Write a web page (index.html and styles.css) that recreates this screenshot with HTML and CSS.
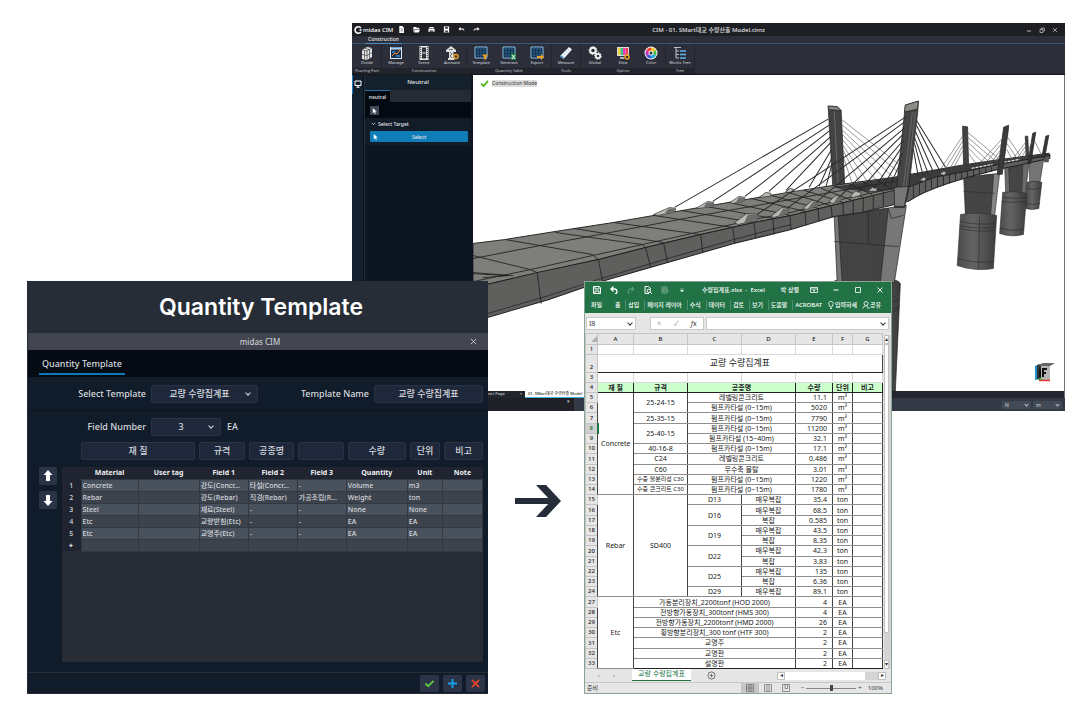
FILE: index.html
```html
<!DOCTYPE html>
<html lang="ko">
<head>
    <meta charset="utf-8">
    <title>Quantity Template</title>
    <link rel="stylesheet" href="styles.css">
</head>
<body>
<main class="stage">

    <!-- modeling window -->
    <section class="cim">
        <header class="cim-title">
            <div class="quick">
                <svg class="logo" viewBox="0 0 10 10"><path d="M8.5 2.6A4 4 0 1 0 8.5 7.4" fill="none" stroke="#fff" stroke-width="2"/><path d="M7 4h2.500v2H7z" fill="#fff"/></svg>
                <b>midas CIM</b>
                <button aria-label="New"><svg viewBox="0 0 8 8"><path d="M1.500 0h3.500l1.800 2v6H1.500z" fill="#fff"/><path d="M3 3.500h2.500M3 5.500h2.500" stroke="#22242c" stroke-width=".7"/></svg></button>
                <button aria-label="Open"><svg viewBox="0 0 8 8"><path d="M.5 1h3l.7 1H7v1.500H2L.5 7zM2.300 4H8L6.700 7.300H1z" fill="#fff"/></svg></button>
                <button aria-label="Print"><svg viewBox="0 0 8 8"><path d="M1.500 1h5v1.500h-5zM.5 3h7v3.500h-7z" fill="#fff"/><path d="M2 5h4v2H2z" fill="#555"/></svg></button>
                <button aria-label="Save"><svg viewBox="0 0 8 8"><path d="M1 .5h6v7H1z" fill="#fff"/><path d="M2.500 1h3v2h-3zM2.500 5h3v2.500h-3z" fill="#33353d"/></svg></button>
                <button aria-label="Undo"><svg viewBox="0 0 8 8"><path d="M3 1L.5 3.500 3 5.500V4h2q1.500 0 2 2 .8-3-2-3.200H3z" fill="#fff"/></svg></button>
                <button aria-label="Redo"><svg viewBox="0 0 8 8"><path d="M5 1l2.500 2.500L5 5.500V4H3Q1.500 4 1 6 .2 3 3 2.800h2z" fill="#fff"/></svg></button>
            </div>
            <h2>CIM - 01. SMart대교 수량산출 Model.cimz</h2>
            <div class="win-buttons">
                <button aria-label="Minimize"><svg viewBox="0 0 6 6"><path d="M1 4h4" stroke="#bbb"/></svg></button>
                <button aria-label="Restore"><svg viewBox="0 0 6 6"><path d="M1 2.500h3v3H1zM2.300 2V1h3v3H4.500" fill="none" stroke="#bbb" stroke-width=".8"/></svg></button>
                <button aria-label="Close"><svg viewBox="0 0 6 6"><path d="M1 1l4 4M5 1L1 5" stroke="#bbb" stroke-width=".8"/></svg></button>
            </div>
        </header>
        <nav class="cim-tabs"><a href="#construction">Construction</a></nav>

        <div class="ribbon">
            <div class="group">
                <div class="tools">
                    <button><svg viewBox="0 0 14 14"><path d="M2 4l5-3 5 1v9l-5 3-5-1z" fill="#e4e4e4"/><path d="M2 4l5 1 5-3M7 5v9M4.500 2.500l5 1v9M2 8.500l5 1 5-3M4.500 4.500v9" fill="none" stroke="#444" stroke-width=".7"/></svg>Divide</button>
                </div>
                <div class="caption">Pouring Part</div>
            </div>
            <div class="group">
                <div class="tools">
                    <button><svg viewBox="0 0 14 14"><path d="M1 1h12v12H1z" fill="#dfe8f2"/><path d="M2 3.500h10V12H2z" fill="#16324e"/><path d="M2 1.800h10" stroke="#3a84c8"/><path d="M3 10l3-3 2 1 3-4" stroke="#ff8a3c" fill="none"/><path d="M3 6h3M7 10h4" stroke="#55b0ff"/></svg>Manage</button>
                    <button><svg viewBox="0 0 14 14"><path d="M2.500 0h9v14h-9z" fill="#e6e6e6"/><path d="M5 1.500h4v5H5zM5 7.500h4v5H5z" fill="#30333c"/><path d="M3.700 1v12M10.300 1v12" stroke="#30333c" stroke-dasharray="1 1"/></svg>Scene</button>
                    <button><svg viewBox="0 0 14 14"><path d="M1 4l5-4 5 4v2H8.500v6h1v2H3v-2h1V6H1z" fill="#ddd"/><path d="M4 3.500h4M5 6l2 2-2 2 2 2" stroke="#444" stroke-width=".7" fill="none"/><circle cx="11" cy="10.500" r="2" fill="none" stroke="#f0a020" stroke-width="1.500"/></svg>Animate</button>
                </div>
                <div class="caption">Construction</div>
            </div>
            <div class="group">
                <div class="tools">
                    <button><svg viewBox="0 0 14 14"><path d="M1 1h12v11H1z" fill="#0d2840" stroke="#8fc3ea"/><path d="M1 3h12M1 6h12M1 9h12M4 1v11M7 1v11M10 1v11" stroke="#356f9c" stroke-width=".7"/><path d="M8 8.500h6l-2 2.500v3l-2-1v-2z" fill="#f0a020"/></svg>Template</button>
                    <button><svg viewBox="0 0 14 14"><path d="M1 1h12v11H1z" fill="#0d2840" stroke="#8fc3ea"/><path d="M1 3h12M1 6h12M1 9h12M4 1v11M7 1v11M10 1v11" stroke="#356f9c" stroke-width=".7"/><path d="M9 7.500h5V14H9z" fill="#1f8a4c"/><path d="M10 9l3 4M13 9l-3 4" stroke="#fff"/></svg>Generate</button>
                    <button><svg viewBox="0 0 14 14"><path d="M1 1h12v11H1z" fill="#0d2840" stroke="#8fc3ea"/><path d="M1 3h12M1 6h12M1 9h12M4 1v11M7 1v11M10 1v11" stroke="#356f9c" stroke-width=".7"/><path d="M7 10h4V8l3 3-3 3v-2H7z" fill="#f0a020"/></svg>Export</button>
                </div>
                <div class="caption">Quantity Table</div>
            </div>
            <div class="group">
                <div class="tools">
                    <button><svg viewBox="0 0 14 14"><path d="M1 10L10 1l3 2.500L4.500 13z" fill="#f4f8ff"/><path d="M1 10l3.500 3 .8-1L2 9z" fill="#3d8fd8"/><path d="M5 7.500l1 1M7 5.500l1 1M9 3.500l1 1" stroke="#68a"/></svg>Measure</button>
                </div>
                <div class="caption">Tools</div>
            </div>
            <div class="group">
                <div class="tools">
                    <button><svg viewBox="0 0 14 14"><circle cx="5" cy="4.500" r="2.800" fill="none" stroke="#f2f2f2" stroke-width="2"/><circle cx="5" cy="4.500" r="4" fill="none" stroke="#f2f2f2" stroke-dasharray="1.500 1.500"/><circle cx="10" cy="10" r="2.200" fill="none" stroke="#f2f2f2" stroke-width="1.800"/><circle cx="10" cy="10" r="3.400" fill="none" stroke="#f2f2f2" stroke-dasharray="1.300 1.300"/></svg>Global</button>
                    <button><svg viewBox="0 0 14 14"><path d="M1 1h12v9H1z" fill="#ddd"/><path d="M2 2h2.500v7H2z" fill="#f4d33a"/><path d="M4.500 2H7v7H4.500z" fill="#3cc47c"/><path d="M7 2h2.500v7H7z" fill="#e83cc8"/><path d="M9.500 2H12v7H9.500z" fill="#f04060"/><path d="M4 12h4" stroke="#ddd" stroke-width="1.500"/><circle cx="11" cy="11" r="2" fill="none" stroke="#f0a020" stroke-width="1.500"/></svg>View</button>
                    <button><svg viewBox="0 0 14 14"><circle cx="7" cy="7" r="6.500" fill="#f4f4f4"/><g fill="none" stroke-width="3"><path d="M7 3a4 4 0 0 1 3.500 2" stroke="#f0c020"/><path d="M10.500 5a4 4 0 0 1 0 4" stroke="#42c04a"/><path d="M10.500 9A4 4 0 0 1 7 11" stroke="#20a8e0"/><path d="M7 11a4 4 0 0 1-3.500-2" stroke="#3858d8"/><path d="M3.500 9a4 4 0 0 1 0-4" stroke="#c030c0"/><path d="M3.500 5A4 4 0 0 1 7 3" stroke="#f04030"/></g><circle cx="7" cy="7" r="1.500" fill="#333"/></svg>Color</button>
                </div>
                <div class="caption">Option</div>
            </div>
            <div class="group">
                <div class="tools">
                    <button><svg viewBox="0 0 14 14"><path d="M1 1.500h7M3 2v10M3 5h3M3 8.500h3M3 12h3" stroke="#bcc3cc" fill="none"/><path d="M7 5h6M7 8.500h6M7 12h6" stroke="#5fb4ea" stroke-width="1.500"/></svg>Works Tree</button>
                </div>
                <div class="caption">Tree</div>
            </div>
        </div>

        <div class="work">
            <div class="rail">
                <button aria-label="Monitor"><svg viewBox="0 0 8 8"><path d="M1 1h6v4.500H1zM4 5.500V7M2.500 7.300h3" fill="none" stroke="#fff"/></svg></button>
            </div>
            <aside class="neutral">
                <h3>Neutral</h3>
                <div class="neutral-tabs"><button>neutral</button></div>
                <div class="neutral-tools"><button aria-label="Pick"><svg viewBox="0 0 8 8"><path d="M2 1v6l1.500-1.400L4.500 8l1-.5-1-2L6.500 5z" fill="#fff"/></svg></button></div>
                <div class="target">
                    <h4><svg viewBox="0 0 6 6"><path d="M1.500 2.500L3 4l1.500-1.500" fill="none" stroke="#ccc" stroke-width=".8"/></svg>Select Target</h4>
                    <button><svg viewBox="0 0 8 8"><path d="M2 1v6l1.500-1.400L4.500 8l1-.5-1-2L6.500 5z" fill="#fff"/></svg>Select</button>
                </div>
            </aside>
            <div class="view">
                <div class="canvas">
                    <svg class="bridge" viewBox="473 75 592 315" preserveAspectRatio="xMinYMin slice" role="img" aria-label="Bridge model">
                        <defs>
                            <linearGradient id="drum"><stop offset="0" stop-color="#4b4b4b"/><stop offset=".4" stop-color="#646464"/><stop offset="1" stop-color="#3c3c3c"/></linearGradient>
                            <pattern id="hatch" width="2" height="2" patternUnits="userSpaceOnUse"><path d="M0 0h2v2H0z" fill="#484848"/><path d="M0 0h1v2H0z" fill="#404040"/></pattern>
                        </defs>
                        <!-- far piers -->
                        <g stroke="#2b2b2b" stroke-width=".6">
                            <path d="M1027 163L1042 158 1038 183H1028z" fill="#747474"/>
                            <path d="M1025 182q7-2 15 0l-3 26q-7 2-13 0z" fill="url(#drum)"/>
                            <path d="M1025 188q7 2 14 0M1024 203q7 2 14 0" fill="none"/>
                            <path d="M1003 166l24-4-3 31h-20z" fill="#6a6a6a"/>
                            <path d="M1007 168l14-3-1 27h-12z" fill="url(#hatch)"/>
                            <path d="M1001 192q12-2 24 1l-3.300 41q-12 3-23.700-1z" fill="url(#drum)"/>
                            <path d="M1001 197q12 2 24 0M1000 201q12 2 24 0M998 228q12 3 24 1" fill="none"/>
                            <path d="M962 177l36-4-5 42h-29z" fill="#858585"/>
                            <path d="M963 177l29-3-3 41h-25z" fill="url(#hatch)"/>
                            <path d="M962 191l31 2" fill="none"/>
                            <path d="M959 214q17-3 36 1l-3.300 53q-18 3-36-3z" fill="url(#drum)"/>
                            <path d="M959 221q17 4 35 2M958 225q17 4 35 2M958 228q17 4 35 2M956 258q17 5 36 3M978 216l-1 53" fill="none"/>
                        </g>
                        <!-- near pier -->
                        <g stroke="#262626" stroke-width=".7">
                            <path d="M829 283q5-4 10-4h50q8 0 10 4l-5 107h-58z" fill="url(#drum)"/>
                            <path d="M892 301q4-1 6-3M892 308q4-1 6-3M892 311q4-1 6-3" fill="none"/>
                            <path d="M833 215l72-10-12 77h-57z" fill="#777"/>
                            <path d="M837 216l50-8-8 74h-38z" fill="url(#hatch)"/>
                            <path d="M833 241l64 5M887 208l3 10 12-3M867 212v31" fill="none"/>
                        </g>
                        <!-- towers on the far side of the deck -->
                        <g stroke="#222" stroke-width=".7" fill="#434343">
                            <path d="M827 106l9 .5 4 4 3.500 74h-12z"/>
                            <path d="M827 106l9 .5 4 4-12.500-1z" fill="#898989"/>
                            <path d="M833 111l4 72" stroke="#777"/>
                            <path d="M961 126l5 .7 1 38h-5z"/>
                            <path d="M1023.500 136h2.500l1 22h-2.500z"/>
                        </g>
                        <!-- cables, far plane -->
                        <path class="cable" d="M827 119L674 207M828 125L712 201M828 131L744 196M829 137L768 191M829 143L785 190M830 150L808 187M831 157L818 186M831 163L825 186"/>
                        <path class="cable thin" d="M840 119L913 176M840 124L903 177M840 129L893 178M841 134L884 179M841 139L875 180M841 144L866 181M842 150L858 182M842 156L851 183M961 136L939 169M961 141L944 168M961 146L949 167M961 151L953 166M966 132L1000 161M966 137L994 161M966 142L988 162M966 147L982 163M966 152L975 164M1024 142L1010 160M1024 146L1014 160M1024 150L1018 160"/>
                        <!-- deck -->
                        <path d="M473 243L505 239 555 231 613 222 653 215 710 205 787 192 833 185 893 177 960 165 993 160 1047 153 1048 155 1027 159 993 165 960 172 933 177 907 187 893 190 843 202 790 215 753 222 700 234 645 247 598 259 537 272 473 287z" fill="#7e7f7b" stroke="#2a2a2a"/>
                        <path d="M830 187L893 177 960 165 1047 153 1048 156 960 172 933 177 907 187 870 192z" fill="#3c3c3c"/>
                        <path d="M473 287L537 272 598 259 645 247 700 234 753 222 790 215 843 202 893 190 907 187 933 177 960 172 993 165 1048 155V158L993 170 963 178 947 183Q920 192 907 201L893 204 860 212 833 216 790 229 733 243 667 262 600 281 548 299 473 321z" fill="#5f5f5d" stroke="#222"/>
                        <path d="M473 317l75-22 52-17 67-20 66-19 57-15" fill="none" stroke="#333"/>
                        <g fill="none" stroke="#252525" stroke-width=".9">
                            <path d="M473 281l57-12 62-14 50-11 58-13 53-12 37-7 55-14 62-13"/>
                            <path d="M473 258l72-14 65-12 90-17 90-16 103-18M600 278"/>
                            <path d="M473 255l57 14 7 3M505 239l87 15 6 5M555 232l87 12 3 3M573 228l90 14M613 222l87 12M653 215l79 12M680 210l73 12M705 206l67 12M728 202l62 13M750 198l54 13M770 195l47 13M787 192l42 13M803 190l39 12M820 188l31 12M834 186l28 11M848 184l23 10M862 182l20 9M876 180l15 9"/>
                            <path d="M537 272l4 31M598 259l4 21M645 247l5 19M663 243l4 19M700 234l2 18M732 227l2 16M753 222l2 15M772 218l1 16M789 215l1 14M804 211l1 14M817 208l1 13M830 205l1 12M842 202v13M852 200v13M862 197v14M872 195v14M882 192v14M912 186v12M918 183v11M924 181v10M930 179v10M936 177v10M942 175v10M948 174v9M954 173v8M960 172v7M966 171v6M972 170v6M978 169v5M984 168v5M990 167v4"/>
                            <path d="M473 273l35 2-25 2M473 272l40 3"/>
                        </g>
                        <path d="M970 168l21-4M1002 162l16-3" stroke="#e6e6e6" stroke-width="1.200" stroke-dasharray="3 1"/>
                        <path d="M1042 157h5v5h-5z" fill="#555"/>
                        <!-- cable anchors -->
                        <g fill="#b9bab4" stroke="#333" stroke-width=".7">
                            <path d="M653 214l16-7 6 1-1 4-17 3zM695 208l12-7 6 1-1 4-14 2zM729 202l9-6 6 1-1 4-11 2zM758 197l7-5 5 1-1 3zM784 192l5-4 4 1-2 3z"/>
                            <path d="M734 222l12-9 11 1-1 6-19 4zM770 216l11-9 7 1-1 5-14 4zM802 208l9-8 6 1-1 5-11 3zM828 201l7-6 6 1-1 4-9 3zM849 196l5-5 6 1-1 3-7 2zM867 191l4-4 5 1-1 3zM938 174l4-3 3 1-2 3zM918 180l4-3 3 1-2 3z"/>
                        </g>
                        <path d="M668 208l7 0-1 4-10 1zM706 202l7 0-1 4-9 1zM738 197l6 0-1 4-8 1zM747 214l10 0-1 6-13 3zM782 208l6 0-1 5-10 3zM812 201l5 0-1 5-9 2zM836 196l5 0-1 4-7 2z" fill="#6c6c6a"/>
                        <!-- towers and cables, near plane -->
                        <g stroke="#1e1e1e" stroke-width=".7">
                            <path d="M904 105l13-4-.7 11-9.300 79-4 16h-10z" fill="#454545"/>
                            <path d="M904 105l13-4-1 8-13 3z" fill="#8b8b87"/>
                            <path d="M911 112l-11 92M914 112l-10 79" stroke="#757575"/>
                            <path d="M893 187l14-1-4 20h-10z" fill="#777"/>
                            <path d="M1002 127l5-2-.5 6-6 43h-5z" fill="#3b3b3b"/>
                            <path d="M1031 133l3-1-5 31h-3zM1044 136l3-1-4 22h-3z" fill="#383838"/>
                        </g>
                        <path class="cable" d="M904 117L756 214M903 122L786 208M903 128L815 202M902 134L838 197M902 140L857 192M901 146L873 188M901 153L882 186M900 160L889 185"/>
                        <path class="cable" d="M915 120L944 167M915 125L938 170M914 131L932 172M913 137L927 174M913 143L922 176M912 149L917 177"/>
                        <path class="cable thin" d="M1002 137L978 163M1001 142L984 163M1001 147L989 163M1000 152L993 162M1006 137L1020 158M1005 143L1016 159M1005 149L1011 160M1031 141L1022 158M1033 141L1040 155"/>
                    </svg>
                    <p class="mode"><svg viewBox="0 0 10 8"><path d="M1 4l3 3 5-6" fill="none" stroke="#4db51e" stroke-width="2"/></svg><span>Construction Mode</span></p>
                    <svg class="cube" viewBox="0 0 20 20"><path d="M0 3l5-2v15l-5 1z" fill="#1f8fd0"/><path d="M2 2l5-1v14l-5 1z" fill="#333"/><path d="M6 3h9v14H6z" fill="#b4b4b4"/><path d="M3 2l5-2h12l-5 3H6z" fill="#666"/><path d="M8 14V6h4M8 10h3M5 6v8" stroke="#111" stroke-width="2" fill="none"/><path d="M2 17l4-2 2 2z" fill="#3bc03b"/><path d="M4 17.500h11" stroke="#e33" stroke-width="1.500"/></svg>
                </div>
                <nav class="docs">
                    <a href="#start">Start Page <i>×</i></a>
                    <a href="#model" class="open">01. SMart대교 수량산출 Model</a>
                </nav>
            </div>
        </div>
        <footer class="cim-status">
            <div class="message">▾</div>
            <span class="drop"><select aria-label="Force unit"><option>N</option></select></span>
            <span class="drop"><select aria-label="Length unit"><option>m</option></select></span>
        </footer>
    </section>

    <!-- template dialog -->
    <section class="dialog">
        <h1>Quantity Template</h1>
        <header class="dialog-title">
            <span>midas CIM</span>
            <button aria-label="Close"><svg viewBox="0 0 8 8"><path d="M1 1l6 6M7 1L1 7" stroke="#d0d0d4"/></svg></button>
        </header>
        <nav class="dialog-tabs"><a href="#template">Quantity Template</a></nav>
        <form class="dialog-body">
            <div class="line first">
                <label for="template">Select Template</label>
                <span class="drop wide"><select id="template"><option>교량 수량집계표</option></select></span>
                <label for="name" class="name">Template Name</label>
                <input id="name" type="text" value="교량 수량집계표">
            </div>
            <div class="line">
                <label for="fields">Field Number</label>
                <span class="drop"><select id="fields"><option>3</option></select></span>
                <span class="unit">EA</span>
            </div>
            <div class="heads">
                <button type="button">재 질</button>
                <button type="button">규격</button>
                <button type="button">공종명</button>
                <button type="button" aria-label="Field 3"></button>
                <button type="button">수량</button>
                <button type="button">단위</button>
                <button type="button">비고</button>
            </div>
            <div class="grid">
                <div class="move">
                    <button type="button" aria-label="Up"><svg viewBox="0 0 10 12"><path d="M5 0l4.500 5H7v6H3V5H.5z" fill="#fff"/></svg></button>
                    <button type="button" aria-label="Down"><svg viewBox="0 0 10 12"><path d="M5 12l4.500-5H7V1H3v6H.5z" fill="#fff"/></svg></button>
                </div>
                <div class="sheet">
                    <table class="fields">
                        <colgroup><col class="no"><col class="c1"><col class="c2"><col class="c3"><col class="c3"><col class="c3"><col class="c4"><col class="c5"><col class="c6"></colgroup>
                        <thead>
                        <tr><th></th><th>Material</th><th>User tag</th><th>Field 1</th><th>Field 2</th><th>Field 3</th><th>Quantity</th><th>Unit</th><th>Note</th></tr>
                        </thead>
                        <tbody>
                        <tr><th>1</th><td>Concrete</td><td></td><td>강도(Concr...</td><td>타설(Concr...</td><td>-</td><td>Volume</td><td>m3</td><td></td></tr>
                        <tr><th>2</th><td>Rebar</td><td></td><td>강도(Rebar)</td><td>직경(Rebar)</td><td>가공조립(R...</td><td>Weight</td><td>ton</td><td></td></tr>
                        <tr><th>3</th><td>Steel</td><td></td><td>재료(Steel)</td><td>-</td><td>-</td><td>None</td><td>None</td><td></td></tr>
                        <tr><th>4</th><td>Etc</td><td></td><td>교량받침(Etc)</td><td>-</td><td>-</td><td>EA</td><td>EA</td><td></td></tr>
                        <tr><th>5</th><td>Etc</td><td></td><td>교명주(Etc)</td><td>-</td><td>-</td><td>EA</td><td>EA</td><td></td></tr>
                        <tr><th>✦</th><td></td><td></td><td></td><td></td><td></td><td></td><td></td><td></td></tr>
                        </tbody>
                    </table>
                </div>
            </div>
        </form>
        <footer class="dialog-foot">
            <button aria-label="OK"><svg viewBox="0 0 12 10"><path d="M1.500 5l3 3 6-6" fill="none" stroke="#5ccb3f" stroke-width="2"/></svg></button>
            <button aria-label="Add"><svg viewBox="0 0 12 10"><path d="M6 0v10M1 5h10" stroke="#12a4ea" stroke-width="2"/></svg></button>
            <button aria-label="Cancel"><svg viewBox="0 0 12 10"><path d="M2 1l8 8M10 1L2 9" stroke="#e8432b" stroke-width="2"/></svg></button>
        </footer>
    </section>

    <svg class="arrow" viewBox="0 0 46 32"><path d="M0 16h40" stroke="#262d38" stroke-width="6"/><path d="M21 0h10l15 16-15 16H21l15-16z" fill="#262d38"/></svg>

    <!-- spreadsheet window -->
    <section class="excel">
        <header class="excel-title">
            <div class="excel-quick">
                <button aria-label="Save"><svg viewBox="0 0 8 8"><path d="M.5.5h6l1 1v6h-7zM2 .5V3h4V.5M2 7.500V5h4v2.500" fill="none" stroke="#fff"/></svg></button>
                <button aria-label="Undo"><svg viewBox="0 0 8 8"><path d="M3.500.5L1 3l2.500 2.500M1 3h4q2 .5 2 2.500T5 8" fill="none" stroke="#fff" stroke-width="1.300"/></svg></button>
                <button aria-label="Redo" class="off"><svg viewBox="0 0 8 8"><path d="M4.500.5L7 3 4.500 5.500M7 3H3Q1 3.500 1 5.500T3 8" fill="none" stroke="#fff"/></svg></button>
                <button aria-label="Preview"><svg viewBox="0 0 8 8"><path d="M5 7.500H1v-7h3.500l2 2v1" fill="none" stroke="#fff"/><circle cx="4.800" cy="4.800" r="1.700" fill="none" stroke="#fff"/><path d="M6 6l2 2" stroke="#fff"/></svg></button>
                <button aria-label="Form" class="off"><svg viewBox="0 0 8 8"><path d="M1 1h5v6H1zM1 3h5M1 5h7M3 1v6" fill="none" stroke="#fff"/></svg></button>
                <button aria-label="More"><svg viewBox="0 0 8 8"><path d="M2.500 3h3M2.500 4.500h3L4 6z" fill="#fff" stroke="#fff" stroke-width=".5"/></svg></button>
            </div>
            <h2>수량집계표.xlsx &nbsp;-&nbsp; Excel</h2>
            <span>박 상렬</span>
            <div class="excel-buttons">
                <button aria-label="Ribbon options"><svg viewBox="0 0 8 8"><path d="M.5 1.500h7v5h-7zM.5 3h7M4 6V4M3 5l1-1 1 1" fill="none" stroke="#fff" stroke-width=".8"/></svg></button>
                <button aria-label="Minimize"><svg viewBox="0 0 8 8"><path d="M1.500 4h5" stroke="#fff"/></svg></button>
                <button aria-label="Maximize"><svg viewBox="0 0 8 8"><path d="M1.500 1.500h5v5h-5z" fill="none" stroke="#fff" stroke-width=".8"/></svg></button>
                <button aria-label="Close"><svg viewBox="0 0 8 8"><path d="M1.500 1.500l5 5M6.500 1.500l-5 5" stroke="#fff" stroke-width=".9"/></svg></button>
            </div>
        </header>
        <nav class="excel-menu">
            <button class="file">파일</button><button>홈</button><button>삽입</button><button>페이지 레이아</button><button>수식</button><button>데이터</button><button>검토</button><button>보기</button><button>도움말</button><button>ACROBAT</button>
            <button class="tell"><svg viewBox="0 0 8 8"><path d="M3 6Q3 5 2.200 4a2.300 2.300 0 1 1 3.600 0Q5 5 5 6zM3 7.500h2" fill="none" stroke="#fff" stroke-width=".8"/></svg>입력하세</button>
            <button class="tell"><svg viewBox="0 0 8 8"><circle cx="4" cy="2.500" r="2" fill="none" stroke="#fff" stroke-width=".8"/><path d="M.8 7.500Q1 5 4 4.800 5.500 5 6 6M5 7h3" fill="none" stroke="#fff" stroke-width=".8"/></svg>공유</button>
        </nav>
        <div class="formula">
            <span class="drop"><select aria-label="Name box"><option>I8</option></select></span>
            <div class="fx"><button aria-label="Cancel">×</button><button aria-label="Enter">✓</button><button class="fn"><i>f</i>x</button></div>
            <span class="drop entry"><input type="text" aria-label="Formula"></span>
        </div>
        <div class="book">
            <table class="cells">
                <colgroup><col class="no"><col class="a"><col class="b"><col class="b"><col class="b"><col class="e"><col class="f"><col class="g"></colgroup>
                <thead>
                <tr><th class="corner">◢</th><th>A</th><th>B</th><th>C</th><th>D</th><th>E</th><th>F</th><th>G</th></tr>
                </thead>
                <tbody>
                <tr class="blank"><th>1</th><td></td><td></td><td></td><td></td><td></td><td></td><td></td></tr>
                <tr class="title"><th>2</th><td colspan="7">교량 수량집계표</td></tr>
                <tr class="blank"><th>3</th><td></td><td></td><td></td><td></td><td></td><td></td><td></td></tr>
                <tr class="head"><th>4</th><td>재 질</td><td>규격</td><td colspan="2">공종명</td><td>수량</td><td>단위</td><td>비고</td></tr>
                <tr><th>5</th><td rowspan="10">Concrete</td><td rowspan="2">25-24-15</td><td colspan="2">레벨링콘크리트</td><td class="n">11.1</td><td>m³</td><td></td></tr>
                <tr><th>6</th><td colspan="2">펌프카타설 (0~15m)</td><td class="n">5020</td><td>m³</td><td></td></tr>
                <tr><th>7</th><td>25-35-15</td><td colspan="2">펌프카타설 (0~15m)</td><td class="n">7790</td><td>m³</td><td></td></tr>
                <tr class="current"><th>8</th><td rowspan="2">25-40-15</td><td colspan="2">펌프카타설 (0~15m)</td><td class="n">11200</td><td>m³</td><td></td></tr>
                <tr><th>9</th><td colspan="2">펌프카타설 (15~40m)</td><td class="n">32.1</td><td>m³</td><td></td></tr>
                <tr><th>10</th><td>40-16-8</td><td colspan="2">펌프카타설 (0~15m)</td><td class="n">17.1</td><td>m³</td><td></td></tr>
                <tr><th>11</th><td>C24</td><td colspan="2">레벨링콘크리트</td><td class="n">0.486</td><td>m³</td><td></td></tr>
                <tr><th>12</th><td>C60</td><td colspan="2">무수축 몰탈</td><td class="n">3.01</td><td>m³</td><td></td></tr>
                <tr><th>13</th><td class="long">수중 불분리성 C30</td><td colspan="2">펌프카타설 (0~15m)</td><td class="n">1220</td><td>m³</td><td></td></tr>
                <tr><th>14</th><td class="long">수중 콘크리트 C30</td><td colspan="2">펌프카타설 (0~15m)</td><td class="n">1780</td><td>m³</td><td></td></tr>
                <tr class="part"><th>15</th><td rowspan="10">Rebar</td><td rowspan="10">SD400</td><td>D13</td><td>매우복잡</td><td class="n">35.4</td><td>ton</td><td></td></tr>
                <tr><th>16</th><td rowspan="2">D16</td><td>매우복잡</td><td class="n">68.5</td><td>ton</td><td></td></tr>
                <tr><th>17</th><td>복잡</td><td class="n">0.585</td><td>ton</td><td></td></tr>
                <tr><th>18</th><td rowspan="2">D19</td><td>매우복잡</td><td class="n">43.5</td><td>ton</td><td></td></tr>
                <tr><th>19</th><td>복잡</td><td class="n">8.35</td><td>ton</td><td></td></tr>
                <tr><th>20</th><td rowspan="2">D22</td><td>매우복잡</td><td class="n">42.3</td><td>ton</td><td></td></tr>
                <tr><th>21</th><td>복잡</td><td class="n">3.83</td><td>ton</td><td></td></tr>
                <tr><th>22</th><td rowspan="2">D25</td><td>매우복잡</td><td class="n">135</td><td>ton</td><td></td></tr>
                <tr><th>23</th><td>복잡</td><td class="n">6.36</td><td>ton</td><td></td></tr>
                <tr><th>24</th><td>D29</td><td>매우복잡</td><td class="n">89.1</td><td>ton</td><td></td></tr>
                <tr class="part"><th>27</th><td rowspan="7">Etc</td><td colspan="3">가동분리장치_2200tonf (HOD 2000)</td><td class="n">4</td><td>EA</td><td></td></tr>
                <tr><th>28</th><td colspan="3">전방향가동장치_300tonf (HMS 300)</td><td class="n">4</td><td>EA</td><td></td></tr>
                <tr><th>29</th><td colspan="3">전방향가동장치_2200tonf (HMD 2000)</td><td class="n">26</td><td>EA</td><td></td></tr>
                <tr><th>30</th><td colspan="3">횡방향분리장치_300 tonf (HTF 300)</td><td class="n">2</td><td>EA</td><td></td></tr>
                <tr><th>31</th><td colspan="3">교명주</td><td class="n">2</td><td>EA</td><td></td></tr>
                <tr><th>32</th><td colspan="3">교명판</td><td class="n">2</td><td>EA</td><td></td></tr>
                <tr class="last"><th>33</th><td colspan="3">설명판</td><td class="n">2</td><td>EA</td><td></td></tr>
                </tbody>
            </table>
            <div class="vscroll"><span>▴</span><div></div><span>▾</span></div>
        </div>
        <div class="sheets">
            <span class="nav">‹</span><span class="nav">›</span>
            <a href="#sheet">교량 수량집계표</a>
            <button aria-label="New sheet"><svg viewBox="0 0 10 10"><circle cx="5" cy="5" r="4" fill="none" stroke="#666"/><path d="M5 3v4M3 5h4" stroke="#666"/></svg></button>
            <div class="hscroll"><span>◂</span><div></div><span>▸</span></div>
        </div>
        <footer class="excel-status">
            <span>준비</span>
            <button class="on" aria-label="Normal"><svg viewBox="0 0 8 8"><path d="M.5.5h7v7h-7zM.5 3h7M.5 5h7M3 0v8M5 0v8" fill="none" stroke="#777" stroke-width=".8"/></svg></button>
            <button aria-label="Page layout"><svg viewBox="0 0 8 8"><path d="M.5.5h7v7h-7zM2 2h4M2 4h4M2 6h4" fill="none" stroke="#777" stroke-width=".8"/></svg></button>
            <button aria-label="Page break"><svg viewBox="0 0 8 8"><path d="M.5.5h7v7h-7zM3 0v4.500h2.500V0" fill="none" stroke="#777" stroke-width=".8"/></svg></button>
            <div class="zoom"><span>−</span><input type="range" aria-label="Zoom" min="10" max="190" value="100"><span>+</span></div>
            <span>100%</span>
        </footer>
    </section>
</main>
</body>
</html>
```
FILE: styles.css
```css
*, *::after {
    box-sizing: border-box;
}

body {
    margin: 0;
    background: #fff;
    font-family: "Noto Sans", "Noto Sans CJK KR", sans-serif;
    font-size: 7px;
    line-height: 10px;
}

h1, h2, h3, h4, p {
    margin: 0;
    font-weight: normal;
    font-size: inherit;
}

button, input, select {
    font: inherit;
    color: inherit;
    background: none;
    border: 0;
    border-radius: 0;
    margin: 0;
    padding: 0;
    min-width: 0;
}

select {
    appearance: none;
    width: 100%;
    height: 100%;
}

a {
    color: inherit;
    text-decoration: none;
}

svg {
    display: block;
    flex: none;
}

/* the three windows overlap on one grid */
.stage {
    display: grid;
    grid-template-columns: 325fr 136fr 96fr 308fr 173fr;
    grid-template-rows: 258px 130px auto;
    padding: 23px 23px 27px 27px;
}

.drop {
    position: relative;
    display: block;
}

.drop::after {
    content: "";
    position: absolute;
    right: 7px;
    top: 50%;
    width: 4px;
    height: 4px;
    margin-top: -3px;
    border: solid currentColor;
    border-width: 0 1px 1px 0;
    transform: rotate(45deg);
    pointer-events: none;
}

/* modeling window */
.cim {
    grid-column: 2 / -1;
    grid-row: 1 / 3;
    display: flex;
    flex-direction: column;
    min-width: 0;
    background: #2c2f39;
    color: #c4c6cc;
    font-size: 5px;
    font-weight: 500;
    line-height: 6px;
}

.cim-title {
    display: grid;
    grid-template-columns: 1fr auto 1fr;
    align-items: center;
    height: 13px;
    background: #1e1f25;
}

.cim-title h2 {
    font-size: 6px;
    font-weight: 500;
    color: #e2e2e4;
}

.quick {
    display: flex;
    align-items: center;
    gap: 8px;
    padding-left: 2px;
}

.quick b {
    margin: 0 -3px 0 -7px;
    font-size: 6px;
    font-weight: 500;
    color: #fff;
}

.quick svg {
    width: 7px;
    height: 7px;
}

.quick .logo {
    width: 8px;
    height: 8px;
}

.win-buttons {
    display: flex;
    justify-content: flex-end;
    gap: 7px;
    padding-right: 7px;
}

.win-buttons svg {
    width: 6px;
    height: 6px;
}

.cim-tabs {
    height: 8px;
    border-bottom: 1px solid #345877;
    padding-left: 13px;
    line-height: 7px;
    color: #e4e4e6;
}

.cim-tabs a {
    display: inline-block;
    height: 8px;
    padding: 0 3px;
    border-bottom: 1px solid #4b8fc9;
}

.ribbon {
    display: flex;
    height: 31px;
    padding-left: 1px;
    border-bottom: 1px solid #14161c;
}

.group {
    display: flex;
    flex-direction: column;
    justify-content: space-between;
    border-right: 1px solid #23252d;
}

.tools {
    display: flex;
    padding-top: 2px;
}

.tools button {
    width: 28px;
    font-size: 4px;
    line-height: 5px;
    white-space: nowrap;
}

.tools svg {
    width: 14px;
    height: 14px;
    margin: 0 auto;
}

.caption {
    height: 6px;
    background: #22242c;
    font-size: 4px;
    text-align: center;
    color: #b4b6be;
}

.work {
    display: flex;
    flex: 1;
    min-height: 0;
    background: #0c1622;
}

.rail {
    width: 12px;
    border-right: 1px solid #0a0f16;
    background: #14202e;
}

.rail button {
    display: block;
    width: 11px;
    padding: 5px 1px 6px;
    border-left: 1px solid #1a7ec0;
}

.rail svg {
    width: 8px;
    height: 8px;
}

.neutral {
    width: 107px;
    border-left: 1px solid #25303c;
    color: #e4e6ea;
}

.neutral h3 {
    height: 15px;
    background: #14202c;
    font-size: 6px;
    font-weight: 500;
    line-height: 15px;
    text-align: center;
}

.neutral-tabs {
    height: 12px;
    background: #242b35;
}

.neutral-tabs button {
    width: 25px;
    height: 12px;
    background: #040a11;
    border-top: 1px solid #2b6fa5;
}

.neutral-tools {
    height: 16px;
    padding: 4px 5px;
    background: #040a11;
}

.neutral-tools button {
    padding: 1px;
    background: #3d4755;
}

.neutral-tools svg, .target svg {
    width: 7px;
    height: 7px;
}

.target {
    padding: 2px 3px 3px 5px;
    background: #111c28;
}

.target h4 {
    display: flex;
    gap: 1px;
    height: 11px;
    font-weight: 500;
    line-height: 8px;
}

.target button {
    display: grid;
    grid-template-columns: 7px 1fr 7px;
    align-items: center;
    width: 100%;
    height: 11px;
    padding: 0 2px;
    border-radius: 1px;
    background: #0f7db8;
}

.view {
    display: flex;
    flex: 1;
    flex-direction: column;
    min-width: 0;
    margin-left: 2px;
    border-right: 1px solid #70717c;
}

.canvas {
    position: relative;
    flex: 1;
    min-height: 0;
    background: #fff;
}

.bridge {
    width: 100%;
    height: 100%;
}

.cable {
    fill: none;
    stroke: #2b2b2b;
    stroke-width: 1;
}

.cable.thin {
    stroke: #555;
    stroke-width: .6;
}

.mode {
    position: absolute;
    left: 7px;
    top: 5px;
    display: flex;
    gap: 3px;
    color: #333;
    line-height: 7px;
}

.mode span {
    background: #dcdcdc;
}

.mode svg {
    width: 9px;
    height: 7px;
}

.cube {
    position: absolute;
    right: 9px;
    bottom: 8px;
    width: 20px;
    height: 20px;
}

.docs {
    display: flex;
    height: 7px;
    background: #23262f;
    font-size: 4px;
    line-height: 6px;
    white-space: nowrap;
}

.docs a {
    display: flex;
    justify-content: space-between;
    width: 52px;
    padding: 0 3px 0 12px;
}

.docs .open {
    width: auto;
    padding: 0 6px 0 3px;
    border-bottom: 1px solid #4aaee0;
    background: #fff;
    color: #222;
}

.docs i {
    font-style: normal;
}

.cim-status {
    display: flex;
    align-items: center;
    gap: 2px;
    height: 13px;
    padding-right: 3px;
    background: #333a45;
}

.cim-status .message {
    width: 222px;
    height: 13px;
    margin-right: auto;
    padding-right: 4px;
    background: #202127;
    text-align: right;
}

.cim-status .drop {
    width: 29px;
    height: 8px;
    background: #434a57;
}

.cim-status select {
    padding-left: 3px;
}

.cim-status .drop::after {
    right: 3px;
    width: 3px;
    height: 3px;
    margin-top: -2px;
}

/* template dialog */
.dialog {
    grid-column: 1 / 3;
    grid-row: 2 / 4;
    z-index: 1;
    display: flex;
    flex-direction: column;
    min-width: 0;
    background: #111c2a;
    border: solid #262d36;
    border-width: 0 0 1px 1px;
    color: #d6d9df;
    font-size: 9px;
    font-weight: 500;
    line-height: 12px;
}

.dialog h1 {
    height: 52px;
    padding-left: 6px;
    background: #262d36;
    color: #fff;
    font: 600 23px/52px Inter, sans-serif;
    text-align: center;
}

.dialog-title {
    display: grid;
    grid-template-columns: 1fr auto 1fr;
    align-items: center;
    height: 17px;
    padding-left: 4px;
    background: #42454f;
    color: #c8cad0;
    font-size: 8px;
}

.dialog-title span {
    grid-column: 2;
}

.dialog-title button {
    justify-self: end;
    margin-right: 11px;
}

.dialog-title svg {
    width: 7px;
    height: 7px;
}

.dialog-tabs {
    height: 27px;
    padding: 8px 11px;
    background: #040b13;
}

.dialog-tabs a {
    display: inline-block;
    height: 17px;
    padding: 0 3px;
    border-bottom: 2px solid #1178b6;
}

.dialog-body {
    flex: 1;
}

.line {
    display: flex;
    align-items: center;
    height: 31px;
    padding: 0 5px 0 11px;
}

.line.first {
    height: 34px;
    border-bottom: 1px solid #0a131e;
}

.line label {
    width: 107px;
    margin-right: 5px;
    text-align: right;
    white-space: nowrap;
}

.line .name {
    width: auto;
    margin-left: auto;
}

.line .drop {
    width: 70px;
}

.line .wide {
    width: 107px;
}

.line .drop, .line input {
    height: 18px;
    border: 1px solid #283345;
    border-radius: 2px;
    background: #1e283a;
}

.line input {
    width: 109px;
    text-align: center;
}

.line select {
    padding-right: 10px;
    text-align: center;
    text-align-last: center;
}

.line .unit {
    margin-left: 6px;
}

.heads {
    display: grid;
    grid-template-columns: 115fr 46fr 46fr 46fr 58fr 31fr 39fr;
    gap: 4px;
    padding: 0 5px 7px 53px;
}

.heads button {
    height: 18px;
    border: 1px solid #283345;
    border-radius: 2px;
    background: #1e283a;
}

.grid {
    display: flex;
    gap: 5px;
    padding: 0 5px 0 11px;
}

.move {
    display: flex;
    flex-direction: column;
    gap: 6px;
}

.move button {
    width: 18px;
    height: 18px;
    padding: 3px 4px;
    border-radius: 2px;
    background: #2a3446;
}

.move svg {
    width: 10px;
    height: 12px;
}

.sheet {
    flex: 1;
    min-height: 195px;
    background: #272c35;
}

.fields {
    width: 100%;
    border-collapse: collapse;
    table-layout: fixed;
    font-size: 7px;
    line-height: 11px;
}

.fields th, .fields td {
    height: 12px;
    padding: 0;
    white-space: nowrap;
}

.fields thead th {
    background: #1f2430;
    color: #f0f0f2;
    font-size: 7px;
}

.fields tbody th {
    background: #1f2430;
    font-weight: 500;
}

.fields td {
    padding-left: 1px;
    border: 1px solid #323842;
    background: #3c434d;
}

.fields tbody tr:nth-child(odd) td {
    background: #49515c;
}

.fields .no {
    width: 19px;
}

.fields .c1 {
    width: 57px;
}

.fields .c2 {
    width: 61px;
}

.fields .c3 {
    width: 49px;
}

.fields .c4 {
    width: 61px;
}

.fields .c5 {
    width: 35px;
}

.fields .c6 {
    width: 40px;
}

.dialog-foot {
    display: flex;
    justify-content: flex-end;
    gap: 4px;
    height: 21px;
    padding: 2px 3px;
    border-top: 1px solid #272c35;
}

.dialog-foot button {
    width: 19px;
    height: 17px;
    padding: 4px;
    border-radius: 2px;
    background: #2c3547;
}

.dialog-foot svg {
    width: 11px;
    height: 9px;
}

.arrow {
    grid-column: 3;
    grid-row: 3;
    justify-self: center;
    width: 46px;
    height: 32px;
    margin: 74px 0 0 4px;
}

/* spreadsheet window */
.excel {
    grid-column: 4;
    grid-row: 2 / 4;
    z-index: 1;
    display: flex;
    flex-direction: column;
    min-width: 0;
    border: 1px solid #8aa395;
    background: #e6e6e6;
    color: #333;
    white-space: nowrap;
}

.excel-title {
    display: flex;
    align-items: center;
    height: 16px;
    padding: 0 7px 0 8px;
    background: #217346;
    color: #fff;
    font-size: 6px;
    font-weight: 500;
}

.excel-title h2 {
    margin: 0 auto;
    font-weight: 500;
}

.excel-title svg, .tell svg {
    width: 8px;
    height: 8px;
}

.excel-quick {
    display: flex;
    gap: 9px;
}

.excel-buttons {
    display: flex;
    gap: 14px;
    margin-left: 11px;
}

.off {
    opacity: .35;
}

.excel-menu {
    display: flex;
    align-items: center;
    justify-content: space-between;
    height: 15px;
    padding: 0 10px 1px 6px;
    background: #217346;
    color: #fff;
    font-size: 6px;
    font-weight: 500;
}

.excel-menu button + button:not(.tell) {
    border-left: 1px solid #4d8f6a;
    padding-left: 2px;
}

.excel-menu .file + button:not(.tell) {
    border: 0;
    padding-left: 8px;
}

.tell {
    display: flex;
    align-items: center;
}

.formula {
    display: flex;
    height: 20px;
    padding: 4px 2px 3px 1px;
}

.formula .drop, .fx {
    width: 50px;
    height: 13px;
    border: 1px solid #c8c8c8;
    background: #fff;
}

.formula .drop::after {
    right: 3px;
}

.formula select {
    padding-left: 2px;
}

.formula .fx {
    display: flex;
    justify-content: space-around;
    width: 54px;
    margin: 0 2px 0 14px;
    color: #999;
}

.fx .fn {
    color: #333;
}

.formula .entry {
    flex: 1;
}

.entry input {
    width: 100%;
}

.book {
    display: flex;
    gap: 1px;
}

.cells {
    flex: 1;
    width: 0;
    height: 336px;
    border-collapse: collapse;
    table-layout: fixed;
    background: #fff;
    color: #222;
    line-height: 9px;
}

.cells th, .cells td {
    height: 10px;
    padding: 0;
    border: 1px solid #8d8d8d;
    text-align: center;
}

.cells th {
    border-color: #c4c4c4;
    background: #e6e6e6;
    font-weight: 500;
    font-size: 6px;
    vertical-align: bottom;
}

.cells thead th {
    height: 11px;
}

.cells .corner {
    color: #b0b0b0;
    text-align: right;
}

.cells td {
    border-left-color: #444;
    border-right-color: #444;
}

.cells .n {
    padding-right: 5px;
    text-align: right;
}

.cells .long {
    font-size: 6px;
}

.cells .blank td {
    border-color: #d8d8d8;
}

.cells .title td {
    height: 17px;
    border-top: 1px solid #222;
    border-bottom: 1px solid #222;
    font-size: 9px;
    line-height: 16px;
}

.cells .head td {
    border-color: #222;
    background: #ccffcc;
    font-weight: bold;
}

.cells .part td {
    border-top-color: #222;
}

.cells .last td {
    border-bottom-color: #222;
}

.cells .current th {
    border-right: 2px solid #217346;
    background: #d0d0d0;
    color: #217346;
}

.cells .no {
    width: 12px;
}

.cells .a {
    width: 36px;
}

.cells .b {
    width: 54px;
}

.cells .e {
    width: 37px;
}

.cells .f {
    width: 20px;
}

.cells .g {
    width: 30px;
}

.vscroll, .hscroll {
    display: flex;
    background: #d4d4d4;
    font-size: 6px;
}

.vscroll {
    flex-direction: column;
    width: 10px;
    padding-right: 2px;
    margin-top: 2px;
    line-height: 7px;
    text-align: center;
}

.vscroll span, .hscroll span {
    border: 1px solid #c0c0c0;
    background: #fff;
}

.vscroll div {
    flex: 1;
    margin-bottom: 27px;
    border: 1px solid #c0c0c0;
    background: #fff;
}

.sheets {
    display: flex;
    align-items: center;
    height: 14px;
    border-bottom: 1px solid #c8c8c8;
}

.sheets .nav {
    width: 14px;
    margin-left: 1px;
    text-align: right;
    color: #999;
}

.sheets a {
    align-self: flex-start;
    height: 12px;
    margin: 0 16px 0 17px;
    padding: 0 6px;
    border-bottom: 1px solid #217346;
    background: #fff;
    color: #217346;
}

.sheets svg {
    width: 9px;
    height: 9px;
}

.hscroll {
    width: 109px;
    height: 8px;
    margin: 0 5px 0 auto;
    line-height: 5px;
}

.hscroll span {
    width: 8px;
    text-align: center;
}

.hscroll div {
    flex: 1;
    margin-right: 13px;
    background: #fff;
}

.excel-status {
    display: flex;
    align-items: center;
    height: 10px;
    padding: 0 8px 0 2px;
    font-size: 6px;
}

.excel-status > span:first-child {
    margin-right: auto;
}

.excel-status button {
    height: 10px;
    padding: 1px 5px;
}

.excel-status .on {
    background: #c6c6c6;
}

.excel-status svg {
    width: 8px;
    height: 8px;
}

.zoom {
    display: flex;
    align-items: center;
    gap: 2px;
    margin: 0 6px;
}

.zoom input {
    appearance: none;
    width: 50px;
    height: 1px;
    background: #888;
}

.zoom input::-webkit-slider-thumb {
    appearance: none;
    width: 3px;
    height: 6px;
    background: #444;
}
```
